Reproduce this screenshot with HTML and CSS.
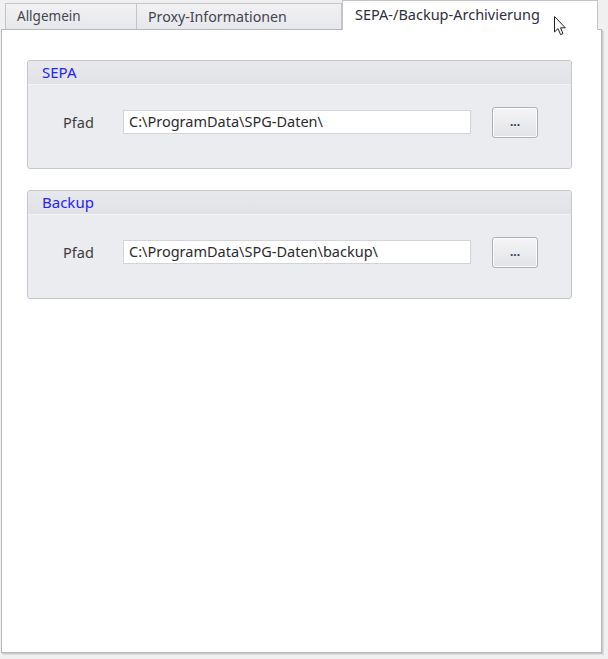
FILE: index.html
```html
<!DOCTYPE html>
<html lang="de">
<head>
<meta charset="utf-8">
<title>Einstellungen</title>
<link rel="stylesheet" href="styles.css">
</head>
<body>
<div class="window">
  <div class="tabs">
    <div class="tab t1">Allgemein</div>
    <div class="tab t2">Proxy-Informationen</div>
    <div class="tab active">SEPA-/Backup-Archivierung</div>
  </div>
  <div class="page">
    <div class="group">
      <div class="group-head">SEPA</div>
      <div class="group-body">
        <span class="label">Pfad</span>
        <div class="input">C:\ProgramData\SPG-Daten\</div>
        <div class="btn">...</div>
      </div>
    </div>
    <div class="group">
      <div class="group-head">Backup</div>
      <div class="group-body">
        <span class="label">Pfad</span>
        <div class="input">C:\ProgramData\SPG-Daten\backup\</div>
        <div class="btn">...</div>
      </div>
    </div>
  </div>
  <svg class="cursor" width="14" height="22" viewBox="0 0 14 22">
    <path d="M1.5 1.5 L1.5 17 L5 13.6 L7.6 19.6 L10 18.6 L7.5 12.8 L12.3 12.8 Z" fill="#fff" stroke="#222" stroke-width="1" stroke-linejoin="miter"/>
  </svg>
</div>
</body>
</html>
```
FILE: styles.css
```css
html, body {
  margin: 0;
  padding: 0;
  background: #f0f0f0;
}
body {
  font-family: "Noto Sans", "DejaVu Sans", sans-serif;
  font-size: 14px;
  color: #3a3a3a;
}
.window {
  position: relative;
  width: 608px;
  height: 659px;
}
.tabs {
  display: flex;
  align-items: flex-end;
  height: 29px;
  padding-left: 5px;
}
.tab {
  box-sizing: border-box;
  height: 26px;
  border: 1px solid #c3c4c8;
  border-bottom: none;
  background: linear-gradient(#f1f1f3, #e7e8eb);
  color: #444452;
  padding: 3px 0 0 11px;
  line-height: 19px;
  font-size: 13.5px;
}
.t1 { width: 132px; }
.t2 { width: 205px; border-left: none; font-size: 14.2px; }
.tab.active {
  width: 256px;
  height: 30px;
  margin-bottom: -1px;
  background: #fff;
  color: #2f2f3c;
  padding: 4px 0 0 12px;
  position: relative;
  z-index: 1;
  border-color: #c3c4c8;
  font-size: 14.5px;
}
.page {
  box-sizing: border-box;
  margin-left: 1px;
  width: 601px;
  height: 624px;
  background: #fff;
  border: 1px solid #b6b8bc;
  box-shadow: 1px 1px 0 #c9cacd, 2px 2px 0 #dcdde0;
  padding: 30px 0 0 25px;
  display: flex;
  flex-direction: column;
  gap: 21px;
}
.group {
  box-sizing: border-box;
  width: 545px;
  border: 1px solid #c6c7cb;
  border-radius: 3px;
  background: #ebecef;
  overflow: hidden;
}
.group-head {
  box-sizing: border-box;
  height: 24px;
  background: linear-gradient(#e8e9ec, #e1e2e6);
  border-bottom: 1px solid #f3f3f5;
  color: #2424f0;
  font-size: 15px;
  padding-left: 14px;
  line-height: 22px;
}
.group-body {
  display: flex;
  align-items: center;
  height: 83px;
  padding-left: 35px;
  padding-bottom: 10px;
  box-sizing: border-box;
}
.label {
  width: 60px;
  color: #3c3c3c;
  font-size: 14.5px;
}
.input {
  box-sizing: border-box;
  width: 348px;
  height: 24px;
  background: #fff;
  border: 1px solid #d3d4d8;
  padding-left: 5px;
  line-height: 21px;
  color: #2c2c2c;
  margin-right: 21px;
  font-size: 14.5px;
}
.btn {
  box-sizing: border-box;
  width: 46px;
  height: 31px;
  border: 1px solid #aeb0b4;
  border-radius: 3px;
  background: linear-gradient(#f5f5f7, #e2e3e6);
  box-shadow: inset 0 0 0 1px #fbfbfc;
  text-align: center;
  line-height: 27px;
  color: #3a3a50;
  font-weight: bold;
  font-size: 12px;
  margin-top: 2px;
}
.cursor {
  position: absolute;
  left: 553px;
  top: 15px;
  z-index: 2;
}
```
